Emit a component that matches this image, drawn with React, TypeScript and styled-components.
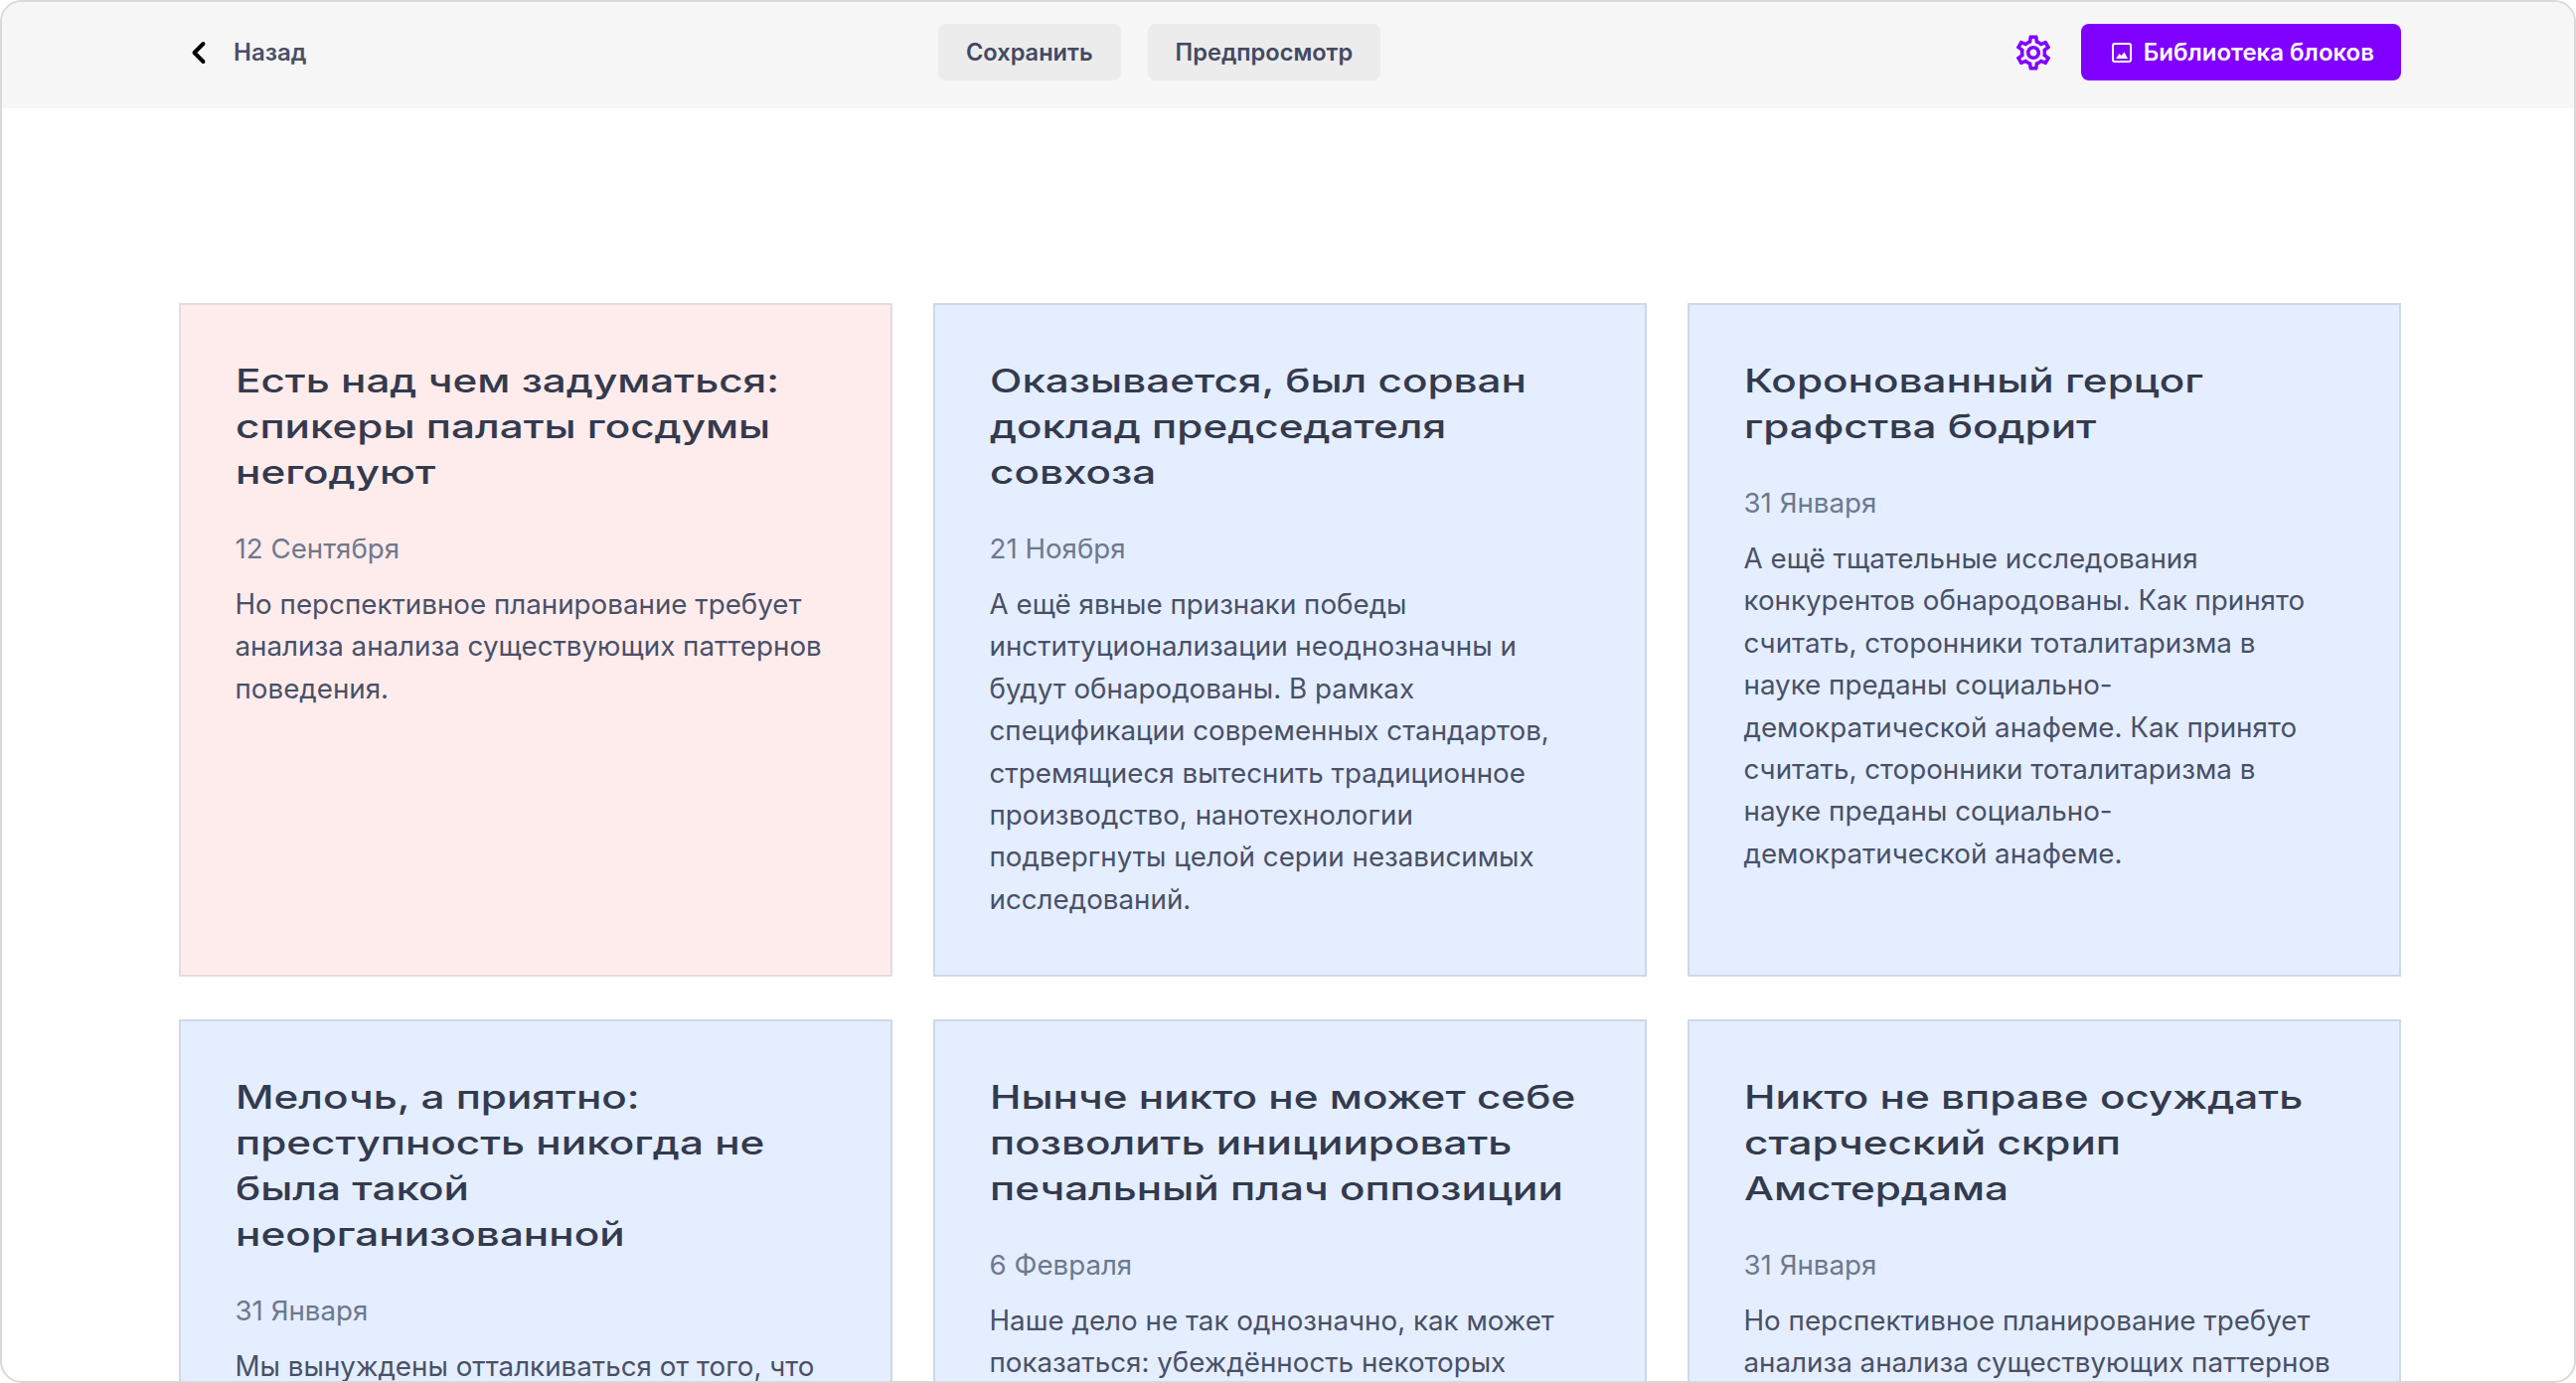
import React from 'react';
import styled, { createGlobalStyle } from 'styled-components';
import { ChevronLeft } from 'lucide-react';
import { MdOutlineSettings } from 'react-icons/md';

const GlobalStyle = createGlobalStyle`
  html, body {
    margin: 0;
    padding: 0;
    background: #fff;
    font-family: Inter, "Liberation Sans", sans-serif;
  }
  * { box-sizing: border-box; }
`;

const Frame = styled.div`
  width: 2592px;
  height: 1392px;
  overflow: hidden;
  border: 2px solid #d9d9d9;
  border-radius: 22px;
  background: #fff;
`;

const TopBar = styled.header`
  height: 107px;
  background: #f6f6f6;
  padding: 22px 174px 0 180px;
  display: flex;
  justify-content: space-between;
  align-items: flex-start;
`;

const BackLink = styled.a`
  height: 57px;
  display: flex;
  align-items: center;
  gap: 17px;
  font-size: 24px;
  font-weight: 600;
  color: #4a4f68;
`;

const CenterActions = styled.div`
  display: flex;
  gap: 27px;
`;

const GreyButton = styled.button`
  height: 57px;
  padding: 0 28px;
  border: none;
  border-radius: 8px;
  background: #ececec;
  color: #434962;
  font-family: inherit;
  font-size: 23.6px;
  font-weight: 600;
`;

const RightActions = styled.div`
  display: flex;
  align-items: center;
  gap: 27px;
`;

const GearButton = styled.span`
  display: flex;
  color: #8000ff;
  stroke: #8000ff;
  stroke-width: 0.35;
`;

const LibraryButton = styled.button`
  height: 57px;
  padding: 0 27px 0 31px;
  border: none;
  border-radius: 8px;
  background: #8000ff;
  color: #fff;
  font-family: inherit;
  font-size: 24px;
  font-weight: 600;
  display: flex;
  align-items: center;
  gap: 12px;
`;

const Grid = styled.main`
  margin-top: 196px;
  padding: 0 174px 0 178px;
  display: grid;
  grid-template-columns: repeat(3, 718px);
  grid-auto-rows: 678px;
  column-gap: 41px;
  row-gap: 43px;
`;

const Card = styled.article<{ $pink?: boolean }>`
  padding: 53px 65px 53px 54.5px;
  background: ${(p) => (p.$pink ? '#feecec' : '#e4eefe')};
  border: 2px solid ${(p) => (p.$pink ? '#e4dcdc' : '#cfd8e6')};
`;

// the heading face in the reference is an extended grotesque, so Inter gets widened
const Title = styled.h2`
  margin: 0;
  width: 464px;
  font-family: Inter, sans-serif;
  font-size: 33px;
  font-weight: 450;
  line-height: 46px;
  color: #343a4e;
  transform: scaleX(1.28);
  transform-origin: left top;
`;

const DateLine = styled.div`
  margin-top: 33px;
  font-size: 27.7px;
  line-height: 42px;
  color: #6e788e;
`;

const Body = styled.p`
  margin: 14px 0 0;
  font-size: 27.75px;
  line-height: 42.4px;
  color: #4a5068;
`;

const PictureIcon = () => (
  <svg width="20" height="20" viewBox="0 0 20 20" fill="none">
    <rect x="1" y="1" width="18" height="18" rx="2" stroke="#fff" strokeWidth="2" />
    <path d="M4 16 L7.5 11 L9.5 13 L12.5 9.5 L16 16 Z" fill="#fff" />
  </svg>
);

const cards = [
  {
    pink: true,
    title: 'Есть над чем задуматься: спикеры палаты госдумы негодуют',
    date: '12 Сентября',
    body: 'Но перспективное планирование требует анализа анализа существующих паттернов поведения.',
  },
  {
    title: 'Оказывается, был сорван доклад председателя совхоза',
    date: '21 Ноября',
    body: 'А ещё явные признаки победы институционализации неоднозначны и будут обнародованы. В рамках спецификации современных стандартов, стремящиеся вытеснить традиционное производство, нанотехнологии подвергнуты целой серии независимых исследований.',
  },
  {
    title: 'Коронованный герцог графства бодрит',
    date: '31 Января',
    body: 'А ещё тщательные исследования конкурентов обнародованы. Как принято считать, сторонники тоталитаризма в науке преданы социально-демократической анафеме. Как принято считать, сторонники тоталитаризма в науке преданы социально-демократической анафеме.',
  },
  {
    title: 'Мелочь, а приятно: преступность никогда не была такой неорганизованной',
    date: '31 Января',
    body: 'Мы вынуждены отталкиваться от того, что',
  },
  {
    title: 'Нынче никто не может себе позволить инициировать печальный плач оппозиции',
    date: '6 Февраля',
    body: 'Наше дело не так однозначно, как может показаться: убеждённость некоторых',
  },
  {
    title: 'Никто не вправе осуждать старческий скрип Амстердама',
    date: '31 Января',
    body: 'Но перспективное планирование требует анализа анализа существующих паттернов',
  },
];

export default function App() {
  return (
    <>
      <GlobalStyle />
      <Frame>
        <TopBar>
          <BackLink>
            <ChevronLeft size={36} color="#000" strokeWidth={2.6} />
            Назад
          </BackLink>
          <CenterActions>
            <GreyButton>Сохранить</GreyButton>
            <GreyButton>Предпросмотр</GreyButton>
          </CenterActions>
          <RightActions>
            <GearButton>
              <MdOutlineSettings size={42} />
            </GearButton>
            <LibraryButton>
              <PictureIcon />
              Библиотека блоков
            </LibraryButton>
          </RightActions>
        </TopBar>
        <Grid>
          {cards.map((c) => (
            <Card key={c.title} $pink={c.pink}>
              <Title>{c.title}</Title>
              <DateLine>{c.date}</DateLine>
              <Body>{c.body}</Body>
            </Card>
          ))}
        </Grid>
      </Frame>
    </>
  );
}
